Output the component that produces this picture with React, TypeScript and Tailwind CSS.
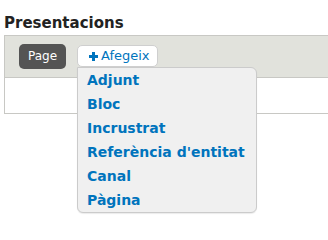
import React from "react";

const items = ["Adjunt", "Bloc", "Incrustrat", "Referència d'entitat", "Canal", "Pàgina"];

export default function App() {
  return (
    <div className="w-[328px] h-[240px] overflow-hidden bg-white pl-[4px] pt-[14px] font-['DejaVu_Sans',sans-serif]">
      <h2 className="text-[15px] leading-[18px] font-bold text-[#222222] mb-[3px]">Presentacions</h2>
      <div className="border border-r-0 border-[#c8c8c4]">
        <div className="h-[42px] bg-[#e1e2dc] border-b border-[#c8c8c4] flex items-start pl-[14px] pt-[8px] gap-[11px]">
          <div className="h-[25px] w-[47px] rounded-[5px] bg-[#545454] text-white text-[12px] leading-[25px] text-center">
            Page
          </div>
          <div className="relative mt-[1px]">
            <div className="h-[22px] w-[81px] bg-white border border-[#cfcfcf] rounded-[5px] flex items-center pl-[11px] text-[13px] text-[#0074bd]">
              <svg width="9" height="9" viewBox="0 0 9 9" className="mr-[3px] shrink-0">
                <rect x="3" y="0" width="3" height="9" fill="#0074bd" />
                <rect x="0" y="3" width="9" height="3" fill="#0074bd" />
              </svg>
              <span className="leading-[20px]">Afegeix</span>
            </div>
            <div className="absolute left-0 top-full w-[180px] bg-[#f0f0f0] border border-[#cbcbcb] rounded-b-[6px] rounded-tr-[6px] shadow-[0_1px_1px_rgba(0,0,0,0.08)] z-10">
              {items.map((t) => (
                <div key={t} className="h-[24px] leading-[24px] pl-[9px] text-[14px] font-bold text-[#0074bd] whitespace-nowrap">
                  {t}
                </div>
              ))}
            </div>
          </div>
        </div>
        <div className="h-[35px]" />
      </div>
    </div>
  );
}
